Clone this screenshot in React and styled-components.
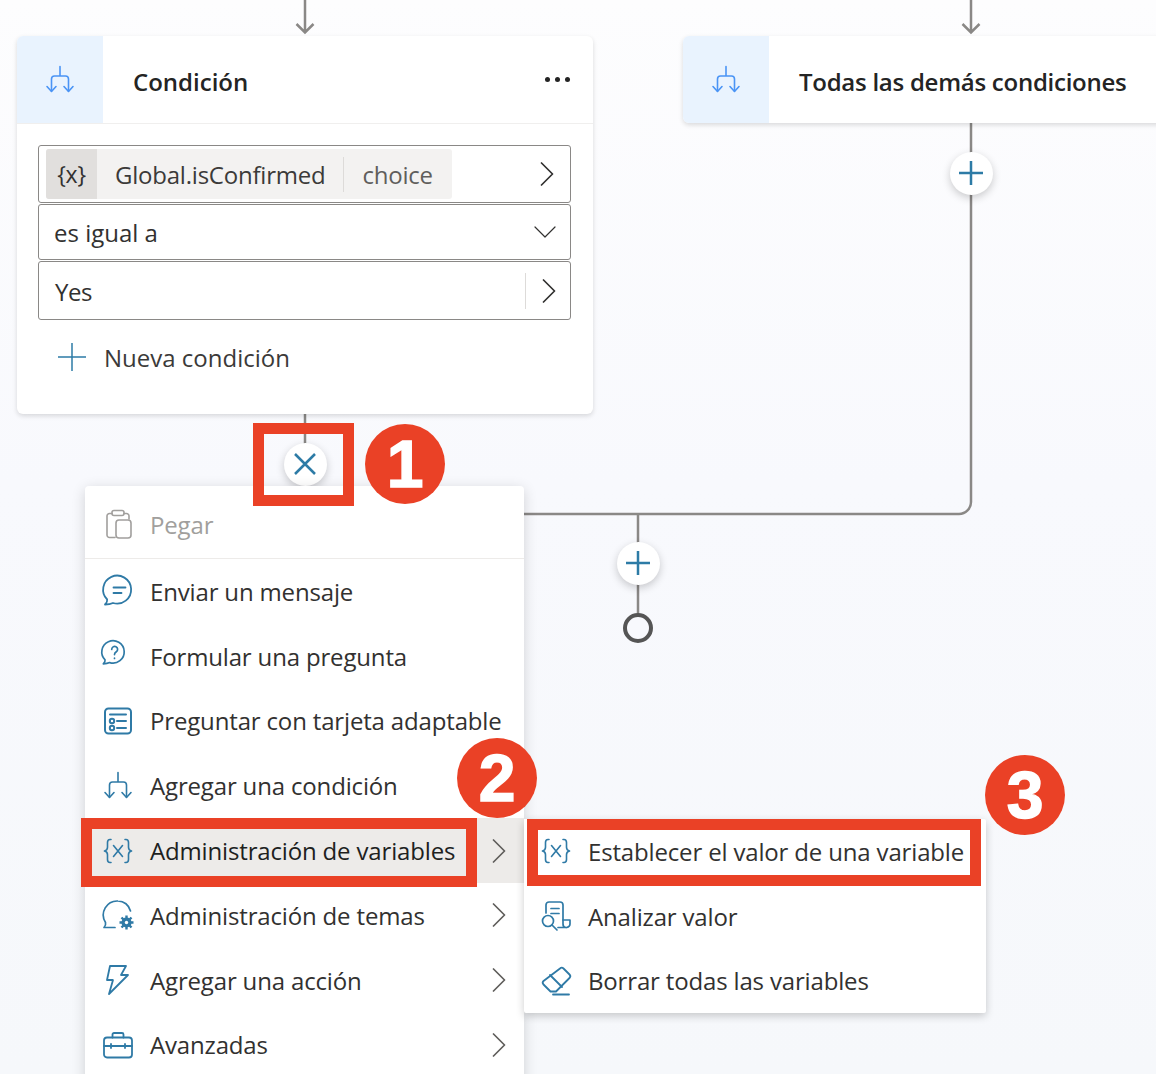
import React from "react";
import styled, { createGlobalStyle } from "styled-components";

const GlobalStyle = createGlobalStyle`
  html, body {
    margin: 0;
    padding: 0;
    background: #f9fafd;
  }
  * {
    box-sizing: border-box;
  }
`;

const Canvas = styled.div`
  position: relative;
  width: 1156px;
  height: 1074px;
  overflow: hidden;
  font-family: "Open Sans", "Noto Sans", sans-serif;
  color: #323130;
  background: linear-gradient(180deg, #fdfdfe 0%, #f8f9fd 45%, #f6f8fb 100%);
`;

const Connectors = styled.svg`
  position: absolute;
  left: 0;
  top: 0;
`;

const NodeCard = styled.div`
  position: absolute;
  left: ${(p) => p.$left}px;
  top: 36px;
  width: ${(p) => p.$width}px;
  background: #fff;
  border-radius: ${(p) => (p.$clipped ? "6px 0 0 6px" : "6px")};
  box-shadow: 0 2px 5px rgba(0, 0, 0, 0.14);
  overflow: hidden;
`;

const CardHeader = styled.div`
  display: flex;
  align-items: center;
  height: ${(p) => (p.$flat ? "87px" : "88px")};
  border-bottom: ${(p) => (p.$flat ? "none" : "1px solid #f0efee")};
`;

const IconCell = styled.div`
  display: flex;
  align-items: center;
  justify-content: center;
  flex: 0 0 86px;
  height: 100%;
  background: #e9f3fe;
  color: #4a94f5;
`;

const CardTitle = styled.h2`
  margin: 4px 0 0 30px;
  font-size: 24px;
  line-height: 32px;
  font-weight: 600;
  letter-spacing: ${(p) => p.$spacing};
  white-space: nowrap;
  color: #242424;
`;

const MoreDots = styled.div`
  display: flex;
  gap: 5px;
  margin: 0 23px 0 auto;
  span {
    width: 5px;
    height: 5px;
    border-radius: 50%;
    background: #242424;
  }
`;

const CardBody = styled.div`
  display: flex;
  flex-direction: column;
  padding: 21px 22px 30px 21px;
`;

const Field = styled.div`
  display: flex;
  align-items: center;
  height: ${(p) => p.$height}px;
  margin-bottom: 1px;
  padding: ${(p) => p.$padding || "0"};
  background: #fff;
  border: 1px solid #8a8886;
  border-radius: 3px;
  font-size: 24px;
`;

const Token = styled.div`
  display: flex;
  align-items: center;
  width: 406px;
  height: 50px;
  background: #f3f2f1;
  border-radius: 3px;
  overflow: hidden;
  letter-spacing: -0.22px;
`;

const TokenIcon = styled.div`
  display: flex;
  align-items: center;
  justify-content: center;
  flex: 0 0 51px;
  height: 100%;
  background: #e1dfdd;
  font-size: 23px;
`;

const TokenName = styled.span`
  padding: 1px 18px 0;
  color: #3b3a39;
  border-right: 1px solid #dddbd9;
  line-height: 34px;
`;

const TokenType = styled.span`
  padding: 1px 0 0 18px;
  color: #605e5c;
`;

const FieldText = styled.span`
  flex: 1;
  padding: ${(p) => p.$top || 0}px 0 0 ${(p) => p.$indent}px;
  letter-spacing: ${(p) => p.$spacing};
`;

const Chevron = styled.svg`
  flex: none;
  margin-left: ${(p) => p.$gap || 0}px;
  margin-right: ${(p) => p.$right || 0}px;
  color: ${(p) => p.$color || "#323130"};
`;

const FieldDivider = styled.div`
  width: 1px;
  height: 36px;
  background: #dddbd9;
`;

const AddCondition = styled.div`
  display: flex;
  align-items: center;
  gap: 18px;
  height: 54px;
  margin-top: 9px;
  padding-left: 20px;
  font-size: 24px;
  color: #3b3a39;
`;

const RoundButton = styled.div`
  position: absolute;
  left: ${(p) => p.$x - 21.5}px;
  top: ${(p) => p.$y - 21.5}px;
  display: flex;
  align-items: center;
  justify-content: center;
  width: 43px;
  height: 43px;
  border-radius: 50%;
  background: #fff;
  color: #2d7ba6;
  box-shadow: 0 3px 8px rgba(0, 0, 0, 0.2);
`;

const EndDot = styled.div`
  position: absolute;
  left: 623px;
  top: 613px;
  width: 30px;
  height: 30px;
  border: 4px solid #555;
  border-radius: 50%;
  background: #f8f9fd;
`;

const Menu = styled.div`
  position: absolute;
  left: 85px;
  top: 486px;
  width: 439px;
  height: 600px;
  background: #fff;
  border-radius: 4px;
  box-shadow: 0 3px 14px rgba(0, 0, 0, 0.16);
`;

const SubMenu = styled.div`
  position: absolute;
  left: 524px;
  top: 819px;
  width: 462px;
  background: #fff;
  border-radius: 0 2px 2px 2px;
  box-shadow: 0 3px 8px rgba(0, 0, 0, 0.2);
`;

const PasteSection = styled.div`
  display: flex;
  align-items: center;
  height: 73px;
  padding: 4px 0 0 18px;
  border-bottom: 1px solid #edebe9;
  color: #a19f9d;
  svg {
    color: #a19f9d;
  }
`;

const MenuList = styled.div`
  display: flex;
  flex-direction: column;
`;

const Row = styled.div`
  display: flex;
  align-items: center;
  height: 64.8px;
  padding-left: ${(p) => p.$indent || 18}px;
  background: ${(p) => (p.$active ? "#edebe9" : "transparent")};
  color: ${(p) => (p.$active ? "#201f1e" : "#323130")};
`;

const RowIcon = styled.svg`
  flex: none;
  width: 30px;
  height: 30px;
  overflow: visible;
  color: #2f7aa6;
`;

const RowLabel = styled.span`
  flex: 1;
  margin-left: 17px;
  font-size: 24px;
  letter-spacing: -0.16px;
  white-space: nowrap;
`;

const RedBox = styled.div`
  position: absolute;
  left: ${(p) => p.$left}px;
  top: ${(p) => p.$top}px;
  width: ${(p) => p.$width}px;
  height: ${(p) => p.$height}px;
  border: 11.5px solid #ea4126;
  pointer-events: none;
`;

const Badge = styled.div`
  position: absolute;
  left: ${(p) => p.$x - 40}px;
  top: ${(p) => p.$y - 40}px;
  display: flex;
  align-items: center;
  justify-content: center;
  width: 80px;
  height: 80px;
  border-radius: 50%;
  background: #ea4126;
  color: #fff;
  font-family: "Liberation Sans", Arial, sans-serif;
  font-size: 66px;
  font-weight: 700;
  -webkit-text-stroke: 1.5px #fff;
`;

const line = {
  fill: "none",
  stroke: "currentColor",
  strokeWidth: 1.6,
  strokeLinecap: "round",
  strokeLinejoin: "round",
};

const BranchIcon = ({ size = 30, weight = 1.6 }) => (
  <svg width={size} height={size} viewBox="0 0 30 30" {...line} strokeWidth={weight}>
    <path d="M15 1.5v9.5M6.5 26V14a3 3 0 0 1 3-3h11a3 3 0 0 1 3 3v12" />
    <path d="M2 21.5l4.5 5 4.5-5M19 21.5l4.500 5 4.500-5" />
  </svg>
);

const ChevronRight = ({ gap, right, size = 24, color }) => (
  <Chevron $gap={gap} $right={right} $color={color} width={size} height={size} viewBox="0 0 24 24" {...line} strokeWidth={1.7}>
    <path d="M6.5 1l11 11-11 11" />
  </Chevron>
);

const PasteIcon = () => (
  <RowIcon viewBox="0 0 30 30" {...line}>
    <path d="M9 4.500H6.500A2.500 2.500 0 0 0 4 7v19a2.500 2.500 0 0 0 2.500 2.500H12" />
    <path d="M21 4.500h2.500A2.500 2.500 0 0 1 26 7v3" />
    <rect x="9" y="1.500" width="12" height="5" rx="2" />
    <rect x="13" y="11" width="15" height="18" rx="3" />
  </RowIcon>
);

const bubblePath = "M1 28.500c1.500-1.500 2.500-3 2.200-5A14 14 0 1 1 9 27c-2.500 1.200-5 1.500-8 1.500z";

const MessageIcon = () => (
  <RowIcon viewBox="-1 0 30 30" {...line} strokeWidth={1.8}>
    <path d={bubblePath} />
    <path d="M9.500 11.500h12M9.500 17h8" />
  </RowIcon>
);

const QuestionIcon = () => (
  <RowIcon viewBox="0 0 30 30" {...line} strokeWidth={2.1}>
    <g transform="translate(-.5 0) scale(.8)">
      <path d={bubblePath} />
      <path d="M11.500 10.500a3.700 3.700 0 1 1 5.800 3c-1.500 1-2.300 1.800-2.300 3.500M15 21.500v.3" />
    </g>
  </RowIcon>
);

const CardIcon = () => (
  <RowIcon viewBox="0 0 30 30" {...line} strokeWidth={2}>
    <rect x="2" y="2.500" width="26" height="25" rx="3.500" />
    <path d="M7 8.500h16M14 15h9M14 22h9" />
    <circle cx="9" cy="15" r="2.200" />
    <circle cx="9" cy="22" r="2.200" />
  </RowIcon>
);

const VariableIcon = () => (
  <RowIcon viewBox="0 0 30 30" {...line}>
    <path d="M8 3.500H7C5 3.500 4.500 5 4.500 6.500v4.800C4.500 13 3.500 14.500 1.500 15c2 .5 3 2 3 3.700V23.500c0 1.500.5 3 2.500 3H8" />
    <path d="M22 3.500h1c2 0 2.500 1.500 2.500 3v4.800c0 1.700 1 3.200 3 3.700-2 .5-3 2-3 3.700V23.500c0 1.500-.5 3-2.500 3h-1" />
    <path d="M10.500 9.500l9 11M19.500 9.500l-9 11" />
  </RowIcon>
);

const TopicIcon = () => (
  <RowIcon viewBox="0 0 30 30" {...line} strokeWidth={1.7}>
    <path d="M12 27.500H1c1.500-1.500 2-3 1.500-5A14 14 0 0 1 15 1c6 0 11 4 12.500 10" />
    <circle cx="23.500" cy="22.500" r="4.200" fill="currentColor" />
    <path strokeWidth={2.4} strokeLinecap="butt" d="M23.500 15.500v14M16.500 22.500h14M18.500 17.500l10 10M28.500 17.500l-10 10" />
    <circle cx="23.500" cy="22.500" r="1.700" fill="#fff" stroke="none" />
  </RowIcon>
);

const ActionIcon = () => (
  <RowIcon viewBox="0 0 30 30" {...line} strokeWidth={1.8}>
    <path d="M7 1h16l-5 9h7L6 29l4-14H4z" />
  </RowIcon>
);

const BriefcaseIcon = () => (
  <RowIcon viewBox="0 0 30 30" {...line} strokeWidth={1.8}>
    <rect x="1" y="7.500" width="28" height="20" rx="3" />
    <path d="M9.500 7.500V4.500A1.500 1.500 0 0 1 11 3h8a1.500 1.500 0 0 1 1.500 1.500v3" />
    <path d="M1 16h28M8 14v4M22 14v4" />
  </RowIcon>
);

const AnalyzeIcon = () => (
  <RowIcon viewBox="0 0 30 30" {...line} strokeWidth={1.7}>
    <path d="M5 12V4a3 3 0 0 1 3-3h11a3 3 0 0 1 3 3v19c0 2 1 3.500 3 3.500h-8" />
    <path d="M22 19h7v4a3.500 3.500 0 0 1-3.500 3.500M10 7.500h8M10 12.500h8" />
    <circle cx="7" cy="20" r="5.500" />
    <path d="M11 24l5 5" />
  </RowIcon>
);

const EraserIcon = () => (
  <RowIcon viewBox="0 0 30 30" {...line} strokeWidth={1.8}>
    <path d="M19 2.500a2.500 2.500 0 0 1 3.500 0l6 6a2.500 2.500 0 0 1 0 3.500L15 25.500H9.500l-7-7a2.500 2.500 0 0 1 0-3.500z" />
    <path d="M9 9l12 12M12 28.500h16" />
  </RowIcon>
);

const mainItems = [
  { label: "Enviar un mensaje", icon: <MessageIcon /> },
  { label: "Formular una pregunta", icon: <QuestionIcon /> },
  { label: "Preguntar con tarjeta adaptable", icon: <CardIcon /> },
  { label: "Agregar una condición", icon: <RowIcon as="span"><BranchIcon /></RowIcon> },
  { label: "Administración de variables", icon: <VariableIcon />, more: true, active: true },
  { label: "Administración de temas", icon: <TopicIcon />, more: true },
  { label: "Agregar una acción", icon: <ActionIcon />, more: true },
  { label: "Avanzadas", icon: <BriefcaseIcon />, more: true },
];

const subItems = [
  { label: "Establecer el valor de una variable", icon: <VariableIcon /> },
  { label: "Analizar valor", icon: <AnalyzeIcon /> },
  { label: "Borrar todas las variables", icon: <EraserIcon /> },
];

function App() {
  return (
    <Canvas>
      <GlobalStyle />
      <Connectors width="1156" height="1074" fill="none" stroke="#8a8886" strokeWidth="2.500">
        <path d="M305 0v32M296.500 24l8.500 8.500 8.500-8.500" />
        <path d="M971 0v32M962.500 24l8.500 8.500 8.500-8.500" />
        <path d="M971 123v379a12 12 0 0 1-12 12H305M638 514v100" />
        <path d="M305 414v30" />
      </Connectors>

      <NodeCard $left={17} $width={576}>
        <CardHeader>
          <IconCell>
            <BranchIcon />
          </IconCell>
          <CardTitle $spacing="0">Condición</CardTitle>
          <MoreDots>
            <span />
            <span />
            <span />
          </MoreDots>
        </CardHeader>
        <CardBody>
          <Field $height={58} $padding="0 0 0 7px">
            <Token>
              <TokenIcon>{"{x}"}</TokenIcon>
              <TokenName>Global.isConfirmed</TokenName>
              <TokenType>choice</TokenType>
            </Token>
            <ChevronRight gap={83} />
          </Field>
          <Field $height={56}>
            <FieldText $indent={15} $spacing="0">es igual a</FieldText>
            <Chevron $right={14} width={22} height={12} viewBox="0 0 22 12" {...line} strokeWidth={1.2}>
              <path d="M1 1l10 10L21 1" />
            </Chevron>
          </Field>
          <Field $height={59}>
            <FieldText $indent={16} $spacing="-0.5px" $top={2}>Yes</FieldText>
            <FieldDivider />
            <ChevronRight gap={11} right={9} />
          </Field>
          <AddCondition>
            <svg width="28" height="28" viewBox="0 0 28 28" stroke="#2d7ba6" strokeWidth="1.500">
              <path d="M0 14h28M14 0v28" />
            </svg>
            Nueva condición
          </AddCondition>
        </CardBody>
      </NodeCard>

      <NodeCard $left={683} $width={480} $clipped>
        <CardHeader $flat>
          <IconCell>
            <BranchIcon />
          </IconCell>
          <CardTitle $spacing="-0.26px">Todas las demás condiciones</CardTitle>
        </CardHeader>
      </NodeCard>

      <RoundButton $x={971} $y={173}>
        <svg width="24" height="24" viewBox="0 0 24 24" stroke="currentColor" strokeWidth="2.500">
          <path d="M0 12h24M12 0v24" />
        </svg>
      </RoundButton>
      <RoundButton $x={638} $y={563}>
        <svg width="24" height="24" viewBox="0 0 24 24" stroke="currentColor" strokeWidth="2.500">
          <path d="M0 12h24M12 0v24" />
        </svg>
      </RoundButton>
      <RoundButton $x={305} $y={464}>
        <svg width="22" height="22" viewBox="0 0 22 22" stroke="currentColor" strokeWidth="2.500">
          <path d="M1 1l20 20M21 1L1 21" />
        </svg>
      </RoundButton>
      <EndDot />

      <Menu>
        <PasteSection>
          <PasteIcon />
          <RowLabel>Pegar</RowLabel>
        </PasteSection>
        <MenuList>
          {mainItems.map((item) => (
            <Row key={item.label} $active={item.active}>
              {item.icon}
              <RowLabel>{item.label}</RowLabel>
              {item.more && <ChevronRight right={13} color="#605e5c" />}
            </Row>
          ))}
        </MenuList>
      </Menu>

      <SubMenu>
        {subItems.map((item) => (
          <Row key={item.label} $indent={17}>
            {item.icon}
            <RowLabel>{item.label}</RowLabel>
          </Row>
        ))}
      </SubMenu>

      <RedBox $left={253} $top={423} $width={101} $height={83} />
      <RedBox $left={81} $top={818} $width={396} $height={69} />
      <RedBox $left={527} $top={819} $width={454} $height={67} />

      <Badge $x={405} $y={464}>1</Badge>
      <Badge $x={497} $y={778}>2</Badge>
      <Badge $x={1025} $y={795}>3</Badge>
    </Canvas>
  );
}

export default App;
